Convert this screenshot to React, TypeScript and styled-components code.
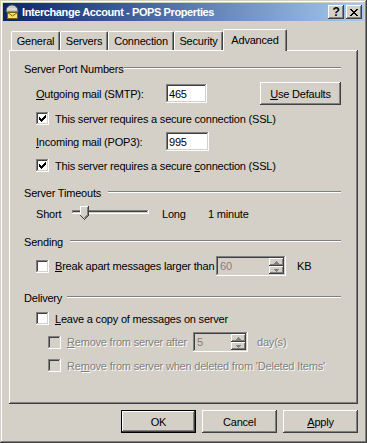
import styled, { createGlobalStyle } from "styled-components";

const GlobalStyle = createGlobalStyle`
  html, body {
    margin: 0;
    padding: 0;
    background: #d4d0c8;
  }
  body {
    font-family: "Liberation Sans", Arial, sans-serif;
    font-size: 11px;
    letter-spacing: -0.2px;
    color: #000;
  }
`;

const raised =
  "box-shadow: inset -1px -1px #404040, inset 1px 1px #ffffff, inset -2px -2px #808080, inset 2px 2px #d4d0c8;";
const sunken =
  "box-shadow: inset -1px -1px #ffffff, inset 1px 1px #808080, inset -2px -2px #d4d0c8, inset 2px 2px #404040;";

const Window = styled.div`
  width: 367px;
  height: 443px;
  box-sizing: border-box;
  padding: 3px;
  background: #d4d0c8;
  box-shadow: inset -1px -1px #404040, inset 1px 1px #d4d0c8,
    inset -2px -2px #808080, inset 2px 2px #ffffff;
  display: flex;
  flex-direction: column;
`;

const TitleBar = styled.div`
  height: 18px;
  display: flex;
  align-items: center;
  padding: 0 2px 0 1px;
  background: linear-gradient(to right, #0a246a, #a6caf0);
`;

const TitleText = styled.span`
  flex: 1;
  margin-left: 2px;
  color: #fff;
  font-weight: bold;
  font-size: 11px;
  letter-spacing: -0.4px;
  white-space: nowrap;
`;

const CaptionButton = styled.div<{ $gap?: number }>`
  width: 16px;
  height: 14px;
  box-sizing: border-box;
  margin-left: ${({ $gap }) => $gap ?? 0}px;
  background: #d4d0c8;
  ${raised}
  display: flex;
  align-items: center;
  justify-content: center;
  font-weight: bold;
  font-size: 12px;
  line-height: 14px;
`;

const Body = styled.div`
  flex: 1;
  display: flex;
  flex-direction: column;
  padding: 7px 6px 0;
`;

const TabStrip = styled.div`
  height: 22px;
  display: flex;
  align-items: flex-end;
  padding-left: 2px;
`;

const Tab = styled.div<{ $w: number; $active?: boolean }>`
  position: relative;
  z-index: ${({ $active }) => ($active ? 2 : 1)};
  width: ${({ $w }) => $w}px;
  height: ${({ $active }) => ($active ? 22 : 19)}px;
  margin-bottom: ${({ $active }) => ($active ? -1 : 0)}px;
  padding-bottom: ${({ $active }) => ($active ? 2 : 0)}px;
  box-sizing: border-box;
  background: #d4d0c8;
  border-top: 1px solid #fff;
  border-left: 1px solid #fff;
  border-right: 1px solid #404040;
  border-radius: 2px 2px 0 0;
  box-shadow: inset -1px 0 #808080;
  display: flex;
  align-items: center;
  justify-content: center;
  white-space: nowrap;
`;

const Panel = styled.div`
  height: 354px;
  box-sizing: border-box;
  padding: 0 17px 0 15px;
  background: #d4d0c8;
  box-shadow: inset -1px -1px #404040, inset 1px 1px #ffffff,
    inset -2px -2px #808080;
  display: flex;
  flex-direction: column;
`;

const GroupHeader = styled.div<{ $mt: number; $label: number }>`
  margin-top: ${({ $mt }) => $mt}px;
  height: 14px;
  display: flex;
  align-items: center;
  span {
    width: ${({ $label }) => $label}px;
    flex: none;
    white-space: nowrap;
  }
`;

const Etched = styled.div`
  flex: 1;
  height: 0;
  border-top: 1px solid #808080;
  border-bottom: 1px solid #ffffff;
  margin-top: -2px;
`;

const Row = styled.div<{ $mt: number; $h: number; $indent?: number }>`
  display: flex;
  align-items: center;
  margin-top: ${({ $mt }) => $mt}px;
  height: ${({ $h }) => $h}px;
  margin-left: ${({ $indent }) => $indent ?? 12}px;
  white-space: nowrap;
`;

const Label = styled.span<{ $w?: number; $ml?: number; $disabled?: boolean }>`
  flex: none;
  width: ${({ $w }) => ($w ? `${$w}px` : "auto")};
  margin-left: ${({ $ml }) => $ml ?? 0}px;
  color: ${({ $disabled }) => ($disabled ? "#808080" : "#000")};
  text-shadow: ${({ $disabled }) => ($disabled ? "1px 1px #ffffff" : "none")};
  u {
    text-decoration: underline;
  }
`;

const TextField = styled.div<{ $w: number }>`
  width: ${({ $w }) => $w}px;
  height: 19px;
  box-sizing: border-box;
  padding: 0 3px;
  background: #fff;
  ${sunken}
  display: flex;
  align-items: center;
`;

const PushButton = styled.div<{ $w: number; $ml?: number; $default?: boolean }>`
  width: ${({ $w }) => $w}px;
  height: 23px;
  margin-left: ${({ $ml }) => $ml ?? 0}px;
  box-sizing: border-box;
  background: #d4d0c8;
  ${({ $default }) =>
    $default
      ? "border: 1px solid #000; box-shadow: inset -1px -1px #404040, inset 1px 1px #ffffff, inset -2px -2px #808080;"
      : raised}
  display: flex;
  align-items: center;
  justify-content: center;
  flex: none;
`;

const Box = styled.div<{ $disabled?: boolean }>`
  width: 13px;
  height: 13px;
  flex: none;
  box-sizing: border-box;
  padding: 3px;
  background: ${({ $disabled }) => ($disabled ? "#d4d0c8" : "#fff")};
  ${sunken}
  margin-right: 6px;
  svg {
    display: block;
  }
`;

const Spinner = styled.div<{ $w: number; $ml: number }>`
  width: ${({ $w }) => $w}px;
  height: 20px;
  margin-left: ${({ $ml }) => $ml}px;
  flex: none;
  box-sizing: border-box;
  padding: 2px;
  background: #d4d0c8;
  ${sunken}
  display: flex;
  align-items: stretch;
`;

const SpinValue = styled.div`
  flex: 1;
  padding-left: 2px;
  color: #808080;
  display: flex;
  align-items: center;
`;

const SpinButtons = styled.div`
  width: 15px;
  display: flex;
  flex-direction: column;
`;

const SpinButton = styled.div`
  flex: 1;
  ${raised}
  display: flex;
  align-items: center;
  justify-content: center;
`;

const Slider = styled.div`
  position: relative;
  width: 77px;
  height: 22px;
  flex: none;
`;

const Track = styled.div`
  margin-top: 7px;
  height: 4px;
  ${sunken}
`;

const Thumb = styled.svg`
  position: absolute;
  left: 8px;
  top: 3px;
`;

const Footer = styled.div`
  display: flex;
  justify-content: flex-end;
  gap: 6px;
  margin-top: 6px;
`;

const Check = () => (
  <svg width="7" height="7" viewBox="0 0 7 7" shapeRendering="crispEdges">
    <path
      d="M0 2h1v1h1v1h1v-1h1v-1h1v-1h1v-1h1v3h-1v1h-1v1h-1v1h-1v1h-1v-1h-1v-1h-1z"
      fill="#000"
    />
  </svg>
);

const CheckBox = ({ checked, disabled }: { checked?: boolean; disabled?: boolean }) => (
  <Box $disabled={disabled}>{checked ? <Check /> : null}</Box>
);

const Arrow = ({ up }: { up?: boolean }) => (
  <svg width="5" height="3" viewBox="0 0 5 3" shapeRendering="crispEdges">
    <path
      d={up ? "M2 0h1v1h1v1h1v1h-5v-1h1v-1h1z" : "M0 0h5v1h-1v1h-1v1h-1v-1h-1v-1h-1z"}
      fill="#808080"
    />
  </svg>
);

const SpinBox = ({ value, w, ml }: { value: string; w: number; ml: number }) => (
  <Spinner $w={w} $ml={ml}>
    <SpinValue>{value}</SpinValue>
    <SpinButtons>
      <SpinButton>
        <Arrow up />
      </SpinButton>
      <SpinButton>
        <Arrow />
      </SpinButton>
    </SpinButtons>
  </Spinner>
);

const MailIcon = () => (
  <svg width="16" height="16" viewBox="0 0 16 16">
    <path d="M2 8 C2 3 5 1 8 1 C11 1 14 3 14 8 Z" fill="#c8c8c8" stroke="#505050" />
    <path d="M3 5 H13" stroke="#e8e8e8" />
    <rect x="3.5" y="8.5" width="10" height="6" fill="#f8e070" stroke="#806000" />
    <path d="M3.5 8.5 L8.5 12 L13.5 8.5" fill="none" stroke="#806000" />
  </svg>
);

const tabs = [
  { name: "General", w: 49 },
  { name: "Servers", w: 48 },
  { name: "Connection", w: 66 },
  { name: "Security", w: 49 },
];

export default function App() {
  return (
    <>
      <GlobalStyle />
      <Window>
        <TitleBar>
          <MailIcon />
          <TitleText>Interchange Account - POPS Properties</TitleText>
          <CaptionButton>?</CaptionButton>
          <CaptionButton $gap={2}>
            <svg width="8" height="7" viewBox="0 0 8 7" shapeRendering="crispEdges">
              <path
                d="M0 0h2v1h1v1h2v-1h1v-1h2v1h-1v1h-1v1h-1v1h1v1h1v1h1v1h-2v-1h-1v-1h-2v1h-1v1h-2v-1h1v-1h1v-1h1v-1h-1v-1h-1v-1h-1z"
                fill="#000"
              />
            </svg>
          </CaptionButton>
        </TitleBar>
        <Body>
          <TabStrip>
            {tabs.map((t) => (
              <Tab key={t.name} $w={t.w}>
                {t.name}
              </Tab>
            ))}
            <Tab $w={64} $active>
              Advanced
            </Tab>
          </TabStrip>
          <Panel>
            <GroupHeader $mt={12} $label={100}>
              <span>Server Port Numbers</span>
              <Etched />
            </GroupHeader>
            <Row $mt={6} $h={23}>
              <Label $w={130}>
                <u>O</u>utgoing mail (SMTP):
              </Label>
              <TextField $w={43}>465</TextField>
              <PushButton $w={81} $ml={53}>
                <span>
                  <u>U</u>se Defaults
                </span>
              </PushButton>
            </Row>
            <Row $mt={7} $h={13}>
              <CheckBox checked />
              <Label>This server requires a secure connection (SSL)</Label>
            </Row>
            <Row $mt={7} $h={19}>
              <Label $w={130}>
                <u>I</u>ncoming mail (POP3):
              </Label>
              <TextField $w={43}>995</TextField>
            </Row>
            <Row $mt={8} $h={13}>
              <CheckBox checked />
              <Label>
                This server requires a secure <u>c</u>onnection (SSL)
              </Label>
            </Row>

            <GroupHeader $mt={14} $label={84}>
              <span>Server Timeouts</span>
              <Etched />
            </GroupHeader>
            <Row $mt={3} $h={22}>
              <Label $w={36}>Short</Label>
              <Slider>
                <Track />
                <Thumb width="9" height="14" viewBox="0 0 9 14" shapeRendering="crispEdges">
                  <path d="M0 0H9V9L5 13H4L0 9Z" fill="#d4d0c8" />
                  <path d="M0.5 9.5V0.5H8" fill="none" stroke="#fff" />
                  <path d="M8.5 0V9.5L4.5 13.5L0.5 9.5" fill="none" stroke="#404040" />
                  <path d="M7.5 1V9L4.5 12" fill="none" stroke="#808080" />
                </Thumb>
              </Slider>
              <Label $w={46} $ml={13}>
                Long
              </Label>
              <Label>1 minute</Label>
            </Row>

            <GroupHeader $mt={10} $label={46}>
              <span>Sending</span>
              <Etched />
            </GroupHeader>
            <Row $mt={7} $h={20}>
              <CheckBox />
              <Label $w={161}>
                <u>B</u>reak apart messages larger than
              </Label>
              <SpinBox value="60" w={70} ml={0} />
              <Label $ml={11}>KB</Label>
            </Row>

            <GroupHeader $mt={15} $label={43}>
              <span>Delivery</span>
              <Etched />
            </GroupHeader>
            <Row $mt={7} $h={13}>
              <CheckBox />
              <Label>
                <u>L</u>eave a copy of messages on server
              </Label>
            </Row>
            <Row $mt={7} $h={20} $indent={24}>
              <CheckBox disabled />
              <Label $w={126} $disabled>
                <u>R</u>emove from server after
              </Label>
              <SpinBox value="5" w={55} ml={0} />
              <Label $ml={9} $disabled>
                day(s)
              </Label>
            </Row>
            <Row $mt={7} $h={13} $indent={24}>
              <CheckBox disabled />
              <Label $disabled>
                Re<u>m</u>ove from server when deleted from 'Deleted Items'
              </Label>
            </Row>
          </Panel>
          <Footer>
            <PushButton $w={75} $default>
              OK
            </PushButton>
            <PushButton $w={75}>Cancel</PushButton>
            <PushButton $w={75}>
              <span>
                <u>A</u>pply
              </span>
            </PushButton>
          </Footer>
        </Body>
      </Window>
    </>
  );
}
